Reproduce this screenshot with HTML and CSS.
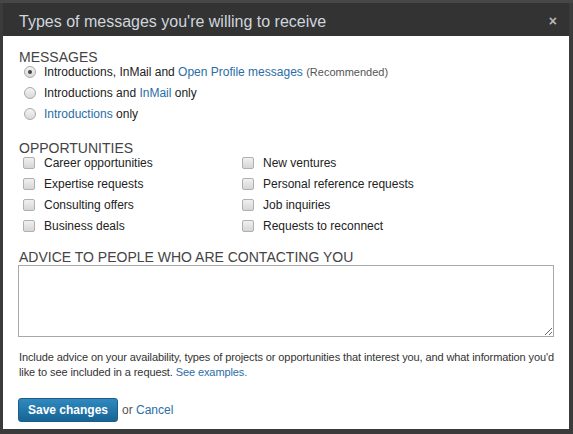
FILE: index.html
```html
<!DOCTYPE html>
<html>
<head>
<meta charset="utf-8">
<link rel="stylesheet" href="styles.css">
</head>
<body>
<div class="dialog">
  <div class="header">
    <span class="title">Types of messages you're willing to receive</span>
    <span class="close">&times;</span>
  </div>
  <div class="content">
    <h3 class="heading">MESSAGES</h3>
    <ul class="radios">
      <li class="row"><span class="radio checked"></span><span>Introductions, InMail and <a class="link">Open Profile messages</a> <span class="note">(Recommended)</span></span></li>
      <li class="row"><span class="radio"></span><span>Introductions and <a class="link">InMail</a> only</span></li>
      <li class="row"><span class="radio"></span><span><a class="link">Introductions</a> only</span></li>
    </ul>
    <h3 class="heading gap">OPPORTUNITIES</h3>
    <ul class="checks">
      <li class="row"><span class="check"></span><span>Career opportunities</span></li>
      <li class="row"><span class="check"></span><span>New ventures</span></li>
      <li class="row"><span class="check"></span><span>Expertise requests</span></li>
      <li class="row"><span class="check"></span><span>Personal reference requests</span></li>
      <li class="row"><span class="check"></span><span>Consulting offers</span></li>
      <li class="row"><span class="check"></span><span>Job inquiries</span></li>
      <li class="row"><span class="check"></span><span>Business deals</span></li>
      <li class="row"><span class="check"></span><span>Requests to reconnect</span></li>
    </ul>
    <h3 class="heading gap2">ADVICE TO PEOPLE WHO ARE CONTACTING YOU</h3>
    <textarea class="advice"></textarea>
    <p class="help">Include advice on your availability, types of projects or opportunities that interest you, and what information you'd like to see included in a request. <a class="link">See examples.</a></p>
    <div class="actions">
      <button class="save">Save changes</button>
      <span class="or">or <a class="link">Cancel</a></span>
    </div>
  </div>
</div>
</body>
</html>
```
FILE: styles.css
```css
* { box-sizing: border-box; }
html, body { margin: 0; padding: 0; }
body {
  background: #3b3b3b;
  font-family: "Liberation Sans", Arial, sans-serif;
  color: #222;
  width: 573px;
  height: 434px;
  overflow: hidden;
  border-top: 3px solid #474747;
}
.dialog {
  margin: 0 4px 0 3px;
}
.header {
  height: 33px;
  background: #333;
  display: flex;
  align-items: center;
  justify-content: space-between;
  padding: 0 12px 0 16px;
}
.title {
  color: #cfd6de;
  font-size: 16px;
  padding-top: 4px;
}
.close {
  color: #b8b8b8;
  font-size: 14px;
  font-weight: bold;
  padding-top: 3px;
}
.content {
  background: #fff;
  height: 393px;
  padding: 16px 16px 0 16px;
}
.heading {
  margin: 0 0 -1px 0;
  font-size: 14px;
  line-height: 10px;
  font-weight: normal;
  color: #444;
}
.heading.gap { margin-top: 19px; }
.heading.gap2 { margin-top: 16px; }
.radios, .checks {
  list-style: none;
  margin: 0;
  padding: 0;
}
.checks {
  display: grid;
  grid-template-columns: 219px 1fr;
}
.row {
  display: flex;
  align-items: center;
  height: 21px;
  font-size: 12px;
  color: #222;
}
.radio {
  width: 12px;
  height: 12px;
  border-radius: 50%;
  border: 1px solid #a9a9a9;
  background: linear-gradient(#f4f4f4, #d9d9d9);
  margin: 0 8px 0 5px;
  flex: none;
  display: flex;
  align-items: center;
  justify-content: center;
}
.radio.checked::after {
  content: "";
  width: 4px;
  height: 4px;
  border-radius: 50%;
  background: #444;
}
.check {
  width: 12px;
  height: 12px;
  border-radius: 2px;
  border: 1px solid #b0b0b0;
  background: linear-gradient(#f0f0f0, #d6d6d6);
  margin: 0 9px 0 4px;
  flex: none;
}
.link { color: #2a6ea6; text-decoration: none; cursor: pointer; }
.note { font-size: 11px; color: #555; }
.advice {
  display: block;
  margin: 4px 0 0 -1px;
  width: 536px;
  height: 72px;
  border: 1px solid #a8a8a8;
  resize: both;
  font-family: inherit;
}
.help {
  margin: 13px -8px 0 0;
  font-size: 11px;
  letter-spacing: -0.1px;
  line-height: 15px;
  color: #333;
}
.actions {
  margin-top: 18px;
  display: flex;
  align-items: center;
}
.save {
  width: 100px;
  height: 24px;
  margin-left: -1px;
  border: 1px solid #1b5c88;
  border-radius: 3px;
  background: linear-gradient(#3089bf, #176495);
  color: #fff;
  font-family: inherit;
  font-size: 12px;
  font-weight: bold;
  padding: 0;
}
.or {
  margin-left: 4px;
  font-size: 12px;
  color: #555;
}
```
